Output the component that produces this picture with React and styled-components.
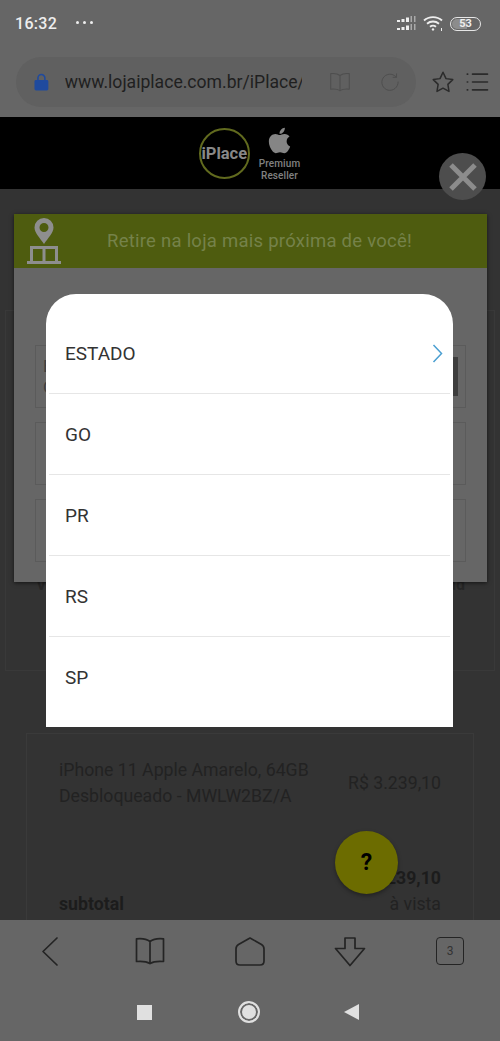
import styled, { createGlobalStyle } from 'styled-components';
import { FaApple } from 'react-icons/fa';

const STATES = ['ESTADO', 'GO', 'PR', 'RS', 'SP'];

const Glyph = ({ size = 32, color = '#242424', width = 1.7, children }) => (
	<svg
		width={size}
		height={size}
		viewBox='0 0 32 32'
		fill='none'
		stroke={color}
		strokeWidth={width}
		strokeLinecap='round'
		strokeLinejoin='round'
	>
		{children}
	</svg>
);

const BookPath = () => (
	<path d='M16 6.5C12.5 3.8 8 3.2 2.5 3.8V26.5C8 26 12.5 26.4 16 28.6C19.5 26.4 24 26 29.5 26.5V3.8C24 3.2 19.5 3.8 16 6.5ZM16 6.5V28.6' />
);

const App = () => {
	return (
		<Page>
			<GlobalStyle />
			<StatusBar>
				<Clock>16:32</Clock>
				<Dots>
					<i />
					<i />
					<i />
				</Dots>
				<StatusIcons>
					<svg width='20' height='15' viewBox='0 0 20 15' fill='#eee'>
						<rect x='0' y='4' width='3' height='2' />
						<rect x='4.5' y='3' width='3' height='3' />
						<rect x='9' y='1.5' width='3' height='4.5' />
						<rect x='13.5' y='0' width='1.5' height='6' opacity='0.5' />
						<rect x='17' y='0' width='1.5' height='6' opacity='0.5' />
						<rect x='0' y='12' width='3' height='2' />
						<rect x='4.5' y='11' width='3' height='3' />
						<rect x='9' y='9.5' width='3' height='4.5' />
						<rect x='13.5' y='8' width='1.5' height='6' opacity='0.5' />
						<rect x='17' y='8' width='1.5' height='6' opacity='0.5' />
					</svg>
					<svg width='21' height='17' viewBox='0 0 21 17' fill='none' stroke='#eee' strokeWidth='1.9'>
						<path d='M1 5.5C6 1 14 1 19 5.5' />
						<path d='M4 8.8C7.5 5.8 12.5 5.8 16 8.8' />
						<path d='M7 11.8C8.8 10.4 11.2 10.4 13 11.8' />
						<circle cx='10' cy='14.4' r='1.2' fill='#eee' stroke='none' />
						<path d='M18.5 13V16' strokeWidth='1' />
					</svg>
					<Battery>
						<BatteryLevel />
						<BatteryText>53</BatteryText>
					</Battery>
				</StatusIcons>
			</StatusBar>

			<UrlRow>
				<UrlPill>
					<svg width='15' height='18' viewBox='0 0 15 18'>
						<path d='M4 8V5a3.5 3.5 0 0 1 7 0v3' fill='none' stroke='#1f4a9e' strokeWidth='1.6' />
						<rect x='0.5' y='7' width='14' height='10.5' rx='1.5' fill='#1f4a9e' />
					</svg>
					<UrlText>www.lojaiplace.com.br/iPlace/</UrlText>
					<PillIcon>
						<Glyph size={22} color='#4e4e4e' width={1.5}>
							<BookPath />
						</Glyph>
					</PillIcon>
					<PillIcon>
						<Glyph size={20} color='#4e4e4e' width={1.6}>
							<path d='M25.5 7.5A13 13 0 1 0 29 16' />
							<path d='M21 8.5H26.5V3' />
						</Glyph>
					</PillIcon>
				</UrlPill>
				<RowIcon>
					<Glyph size={24} color='#2b2b2b' width={2}>
						<path d='M16 3L20 11.5L29 12.8L22.5 19.2L24 28.6L16 24.2L8 28.6L9.5 19.2L3 12.8L12 11.5Z' />
					</Glyph>
				</RowIcon>
				<RowIcon>
					<Glyph size={24} color='#2b2b2b' width={2.2}>
						<path d='M3 5.5H3.6M3 16H3.6M3 26.5H3.6M10 5.5H30M10 16H30M10 26.5H30' />
					</Glyph>
				</RowIcon>
			</UrlRow>

			<SiteHeader>
				<LogoRing>iPlace</LogoRing>
				<Reseller>
					<FaApple size={29} color='#858585' />
					<ResellerText>Premium</ResellerText>
					<ResellerText>Reseller</ResellerText>
				</Reseller>
			</SiteHeader>

			<Content>
				<StoreBox>
					<BoxLabels>
						<span>Ver</span>
						<span>Unidad</span>
					</BoxLabels>
				</StoreBox>
				<OrderCard>
					<OrderLine>
						<p>
							iPhone 11 Apple Amarelo, 64GB
							<br />
							Desbloqueado - MWLW2BZ/A
						</p>
						<span>R$ 3.239,10</span>
					</OrderLine>
					<TotalLine>
						<strong>subtotal</strong>
						<TotalValue>
							<strong>R$ 3.239,10</strong>
							<span>à vista</span>
						</TotalValue>
					</TotalLine>
				</OrderCard>
			</Content>

			<Toolbar>
				<ToolCell>
					<Glyph>
						<path d='M23 3L9 16.5L23 30' />
					</Glyph>
				</ToolCell>
				<ToolCell>
					<Glyph>
						<BookPath />
					</Glyph>
				</ToolCell>
				<ToolCell>
					<Glyph>
						<path d='M16 3L27.5 9.5Q30 11 30 14V26Q30 30 26 30H6Q2 30 2 26V14Q2 11 4.5 9.5Z' />
					</Glyph>
				</ToolCell>
				<ToolCell>
					<Glyph>
						<path d='M11 3H21V13.5H30.5L16 30.5L1.5 13.5H11Z' />
					</Glyph>
				</ToolCell>
				<ToolCell>
					<TabCount>3</TabCount>
				</ToolCell>
			</Toolbar>

			<NavBar>
				<NavSquare />
				<NavCircle />
				<NavBack />
			</NavBar>

			<CloseButton>
				<svg width='30' height='30' viewBox='0 0 30 30' stroke='#8c8c8c' strokeWidth='5'>
					<path d='M3 3L27 27M27 3L3 27' />
				</svg>
			</CloseButton>

			<StorePopup>
				<PopupHeader>
					<svg width='36' height='48' viewBox='0 0 36 48' fill='#8e8e8e'>
						<path
							fillRule='evenodd'
							d='M18 1a9.5 9.5 0 0 1 9.5 9.5C27.5 16 22 21 18 27C14 21 8.5 16 8.5 10.5A9.5 9.5 0 0 1 18 1ZM18 6a4.5 4.5 0 1 0 0 9a4.5 4.5 0 0 0 0-9Z'
						/>
						<path
							fillRule='evenodd'
							d='M4 29H32V44H35V47H1V44H4ZM7 32V44H16.5V32ZM19.5 32V44H29V32Z'
						/>
					</svg>
					<PopupTitle>Retire na loja mais próxima de você!</PopupTitle>
				</PopupHeader>
				<PopupBody>
					<Field>
						<span>
							E
							<br />C
						</span>
						<FieldBar />
					</Field>
					<Field />
					<Field />
				</PopupBody>
			</StorePopup>

			<PickerSheet>
				{STATES.map((state, index) => (
					<PickerRow key={state} $last={index === STATES.length - 1}>
						{state}
						{index === 0 && (
							<svg width='11' height='19' viewBox='0 0 11 19' fill='none' stroke='#4b9fd1' strokeWidth='1.5'>
								<path d='M1.5 1L9.5 9.5L1.5 18' />
							</svg>
						)}
					</PickerRow>
				))}
			</PickerSheet>

			<HelpButton>?</HelpButton>
		</Page>
	);
};

export default App;

const GlobalStyle = createGlobalStyle`
	body {
		margin: 0;
		background: #333;
		font-family: Roboto, 'Liberation Sans', sans-serif;
	}
`;

const Page = styled.div`
	position: relative;
	display: flex;
	flex-direction: column;
	width: 500px;
	height: 1041px;
	overflow: hidden;
	background: #666;
`;

const StatusBar = styled.div`
	display: flex;
	align-items: center;
	height: 47px;
	padding: 0 19px 0 15px;
	flex-shrink: 0;
`;

const Clock = styled.span`
	font-size: 16px;
	font-weight: 500;
	letter-spacing: 0.3px;
	color: #eee;
`;

const Dots = styled.div`
	display: flex;
	gap: 4px;
	margin-left: 19px;
	margin-bottom: 2px;

	i {
		width: 3px;
		height: 3px;
		border-radius: 50%;
		background: #eee;
	}
`;

const StatusIcons = styled.div`
	display: flex;
	align-items: center;
	gap: 6px;
	margin-left: auto;
`;

const Battery = styled.div`
	position: relative;
	display: flex;
	align-items: center;
	justify-content: center;
	box-sizing: border-box;
	width: 31px;
	height: 14px;
	border: 1px solid #e6e6e6;
	border-radius: 8px;
	overflow: hidden;
`;

const BatteryLevel = styled.div`
	position: absolute;
	top: 1px;
	bottom: 1px;
	left: 1px;
	width: 53%;
	border-radius: 6px 0 0 6px;
	background: #8c8c8c;
`;

const BatteryText = styled.span`
	position: relative;
	font-size: 11px;
	font-weight: 700;
	color: #eee;
`;

const UrlRow = styled.div`
	display: flex;
	align-items: center;
	height: 70px;
	padding: 0 13px 0 16px;
	flex-shrink: 0;
`;

const UrlPill = styled.div`
	display: flex;
	align-items: center;
	width: 400px;
	height: 50px;
	padding: 0 15px 0 18px;
	box-sizing: border-box;
	border-radius: 25px;
	background: #606060;
`;

const UrlText = styled.span`
	width: 240px;
	margin-left: 16px;
	overflow: hidden;
	white-space: nowrap;
	font-size: 17.6px;
	color: #1f1f1f;
`;

const PillIcon = styled.span`
	display: flex;
	justify-content: center;
	width: 22px;
	margin-left: 27px;

	& + & {
		margin-left: 28px;
	}
`;

const RowIcon = styled.span`
	display: flex;
	margin-left: 15px;

	& + & {
		margin-left: 10px;
	}
`;

const SiteHeader = styled.div`
	display: flex;
	align-items: center;
	justify-content: center;
	gap: 9px;
	height: 72px;
	padding-right: 1px;
	flex-shrink: 0;
	background: #000;
`;

const LogoRing = styled.div`
	display: flex;
	align-items: center;
	justify-content: center;
	width: 47px;
	height: 47px;
	margin-top: 1px;
	border: 2px solid #616a1e;
	border-radius: 50%;
	font-size: 16.5px;
	font-weight: 700;
	color: #888;
	background: #000;
`;

const Reseller = styled.div`
	display: flex;
	flex-direction: column;
	align-items: center;
	margin-top: 1px;

	svg {
		margin-bottom: 3px;
	}
`;

const ResellerText = styled.span`
	font-size: 10px;
	line-height: 12px;
	font-weight: 500;
	letter-spacing: 0.1px;
	color: #808080;
`;

const Content = styled.div`
	flex: 1;
	min-height: 0;
	padding: 121px 0 0;
	overflow: hidden;
	background: #333;
`;

const StoreBox = styled.div`
	display: flex;
	flex-direction: column;
	justify-content: flex-end;
	box-sizing: border-box;
	height: 361px;
	margin: 0 5px;
	padding: 0 29px 76px 30px;
	border: 1px solid #393939;
`;

const BoxLabels = styled.div`
	display: flex;
	justify-content: space-between;
	font-size: 16px;
	font-weight: 700;
	color: #262626;
`;

const OrderCard = styled.div`
	box-sizing: border-box;
	height: 260px;
	margin: 62px 26px 0;
	padding: 23px 32px 0;
	border: 1px solid #3a3a3a;
	font-size: 17.7px;
	line-height: 26px;
	color: #222;
`;

const OrderLine = styled.div`
	display: flex;
	align-items: center;
	justify-content: space-between;

	p {
		margin: 0;
	}
`;

const TotalLine = styled.div`
	display: flex;
	align-items: flex-end;
	justify-content: space-between;
	margin-top: 56px;

	strong {
		font-weight: 700;
		color: #1c1c1c;
	}
`;

const TotalValue = styled.div`
	display: flex;
	flex-direction: column;
	align-items: flex-end;
`;

const Toolbar = styled.div`
	display: grid;
	grid-template-columns: repeat(5, 100px);
	align-items: center;
	justify-items: center;
	height: 61px;
	flex-shrink: 0;
	background: #666;
`;

const ToolCell = styled.div`
	display: flex;
	align-items: center;
	justify-content: center;
	height: 32px;
`;

const TabCount = styled.div`
	display: flex;
	align-items: center;
	justify-content: center;
	width: 26px;
	height: 26px;
	border: 1.7px solid #242424;
	border-radius: 4px;
	font-size: 12px;
	color: #333;
`;

const NavBar = styled.div`
	display: flex;
	align-items: center;
	justify-content: space-between;
	height: 60px;
	padding: 2px 141px 0 137px;
	box-sizing: border-box;
	flex-shrink: 0;
`;

const NavSquare = styled.div`
	width: 15px;
	height: 15px;
	background: #e0e0e0;
`;

const NavCircle = styled.div`
	box-sizing: border-box;
	width: 22px;
	height: 22px;
	margin-left: 2px;
	border: 2px solid #e0e0e0;
	border-radius: 50%;
	background: #e0e0e0;
	box-shadow: inset 0 0 0 2px #666;
`;

const NavBack = styled.div`
	width: 0;
	height: 0;
	border-top: 8px solid transparent;
	border-bottom: 8px solid transparent;
	border-right: 15px solid #e0e0e0;
`;

const CloseButton = styled.div`
	position: absolute;
	top: 153px;
	left: 439px;
	display: flex;
	align-items: center;
	justify-content: center;
	width: 47px;
	height: 47px;
	border-radius: 50%;
	background: #4d4d4d;
`;

const StorePopup = styled.div`
	position: absolute;
	top: 214px;
	left: 14px;
	width: 473px;
	height: 368px;
	background: #666;
	box-shadow: 0 1px 4px rgba(0, 0, 0, 0.6);
`;

const PopupHeader = styled.div`
	position: relative;
	display: flex;
	align-items: center;
	height: 54px;
	padding-left: 12px;
	box-sizing: border-box;
	background: #4e5c0f;
`;

const PopupTitle = styled.span`
	margin-left: 45px;
	font-size: 18.5px;
	letter-spacing: 0.25px;
	color: #75824a;
`;

const PopupBody = styled.div`
	display: flex;
	flex-direction: column;
	gap: 14px;
	padding: 77px 21px 0;
`;

const Field = styled.div`
	display: flex;
	align-items: center;
	justify-content: space-between;
	box-sizing: border-box;
	height: 63px;
	padding: 0 7px;
	border: 1px solid #5b5b5b;
	font-size: 17px;
	line-height: 21px;
	color: #3f3f3f;
`;

const FieldBar = styled.div`
	width: 6px;
	height: 39px;
	background: #3e3e3e;
`;

const PickerSheet = styled.div`
	position: absolute;
	top: 294px;
	left: 46px;
	width: 407px;
	padding: 19px 3px 0 3px;
	box-sizing: border-box;
	border-radius: 30px 30px 0 0;
	background: #fff;
`;

const PickerRow = styled.div`
	display: flex;
	align-items: center;
	justify-content: space-between;
	box-sizing: border-box;
	height: ${(props) => (props.$last ? '90px' : '81px')};
	padding: ${(props) => (props.$last ? '0 7px 9px 16px' : '0 7px 0 16px')};
	border-bottom: ${(props) => (props.$last ? 'none' : '1px solid #e6e6e6')};
	font-size: 19px;
	color: #333;
`;

const HelpButton = styled.div`
	position: absolute;
	top: 831px;
	left: 335px;
	display: flex;
	align-items: center;
	justify-content: center;
	width: 63px;
	height: 63px;
	border-radius: 50%;
	font-size: 23px;
	font-weight: 700;
	color: #000;
	background: #6c6c00;
	box-shadow: 0 2px 4px rgba(0, 0, 0, 0.35);
`;
